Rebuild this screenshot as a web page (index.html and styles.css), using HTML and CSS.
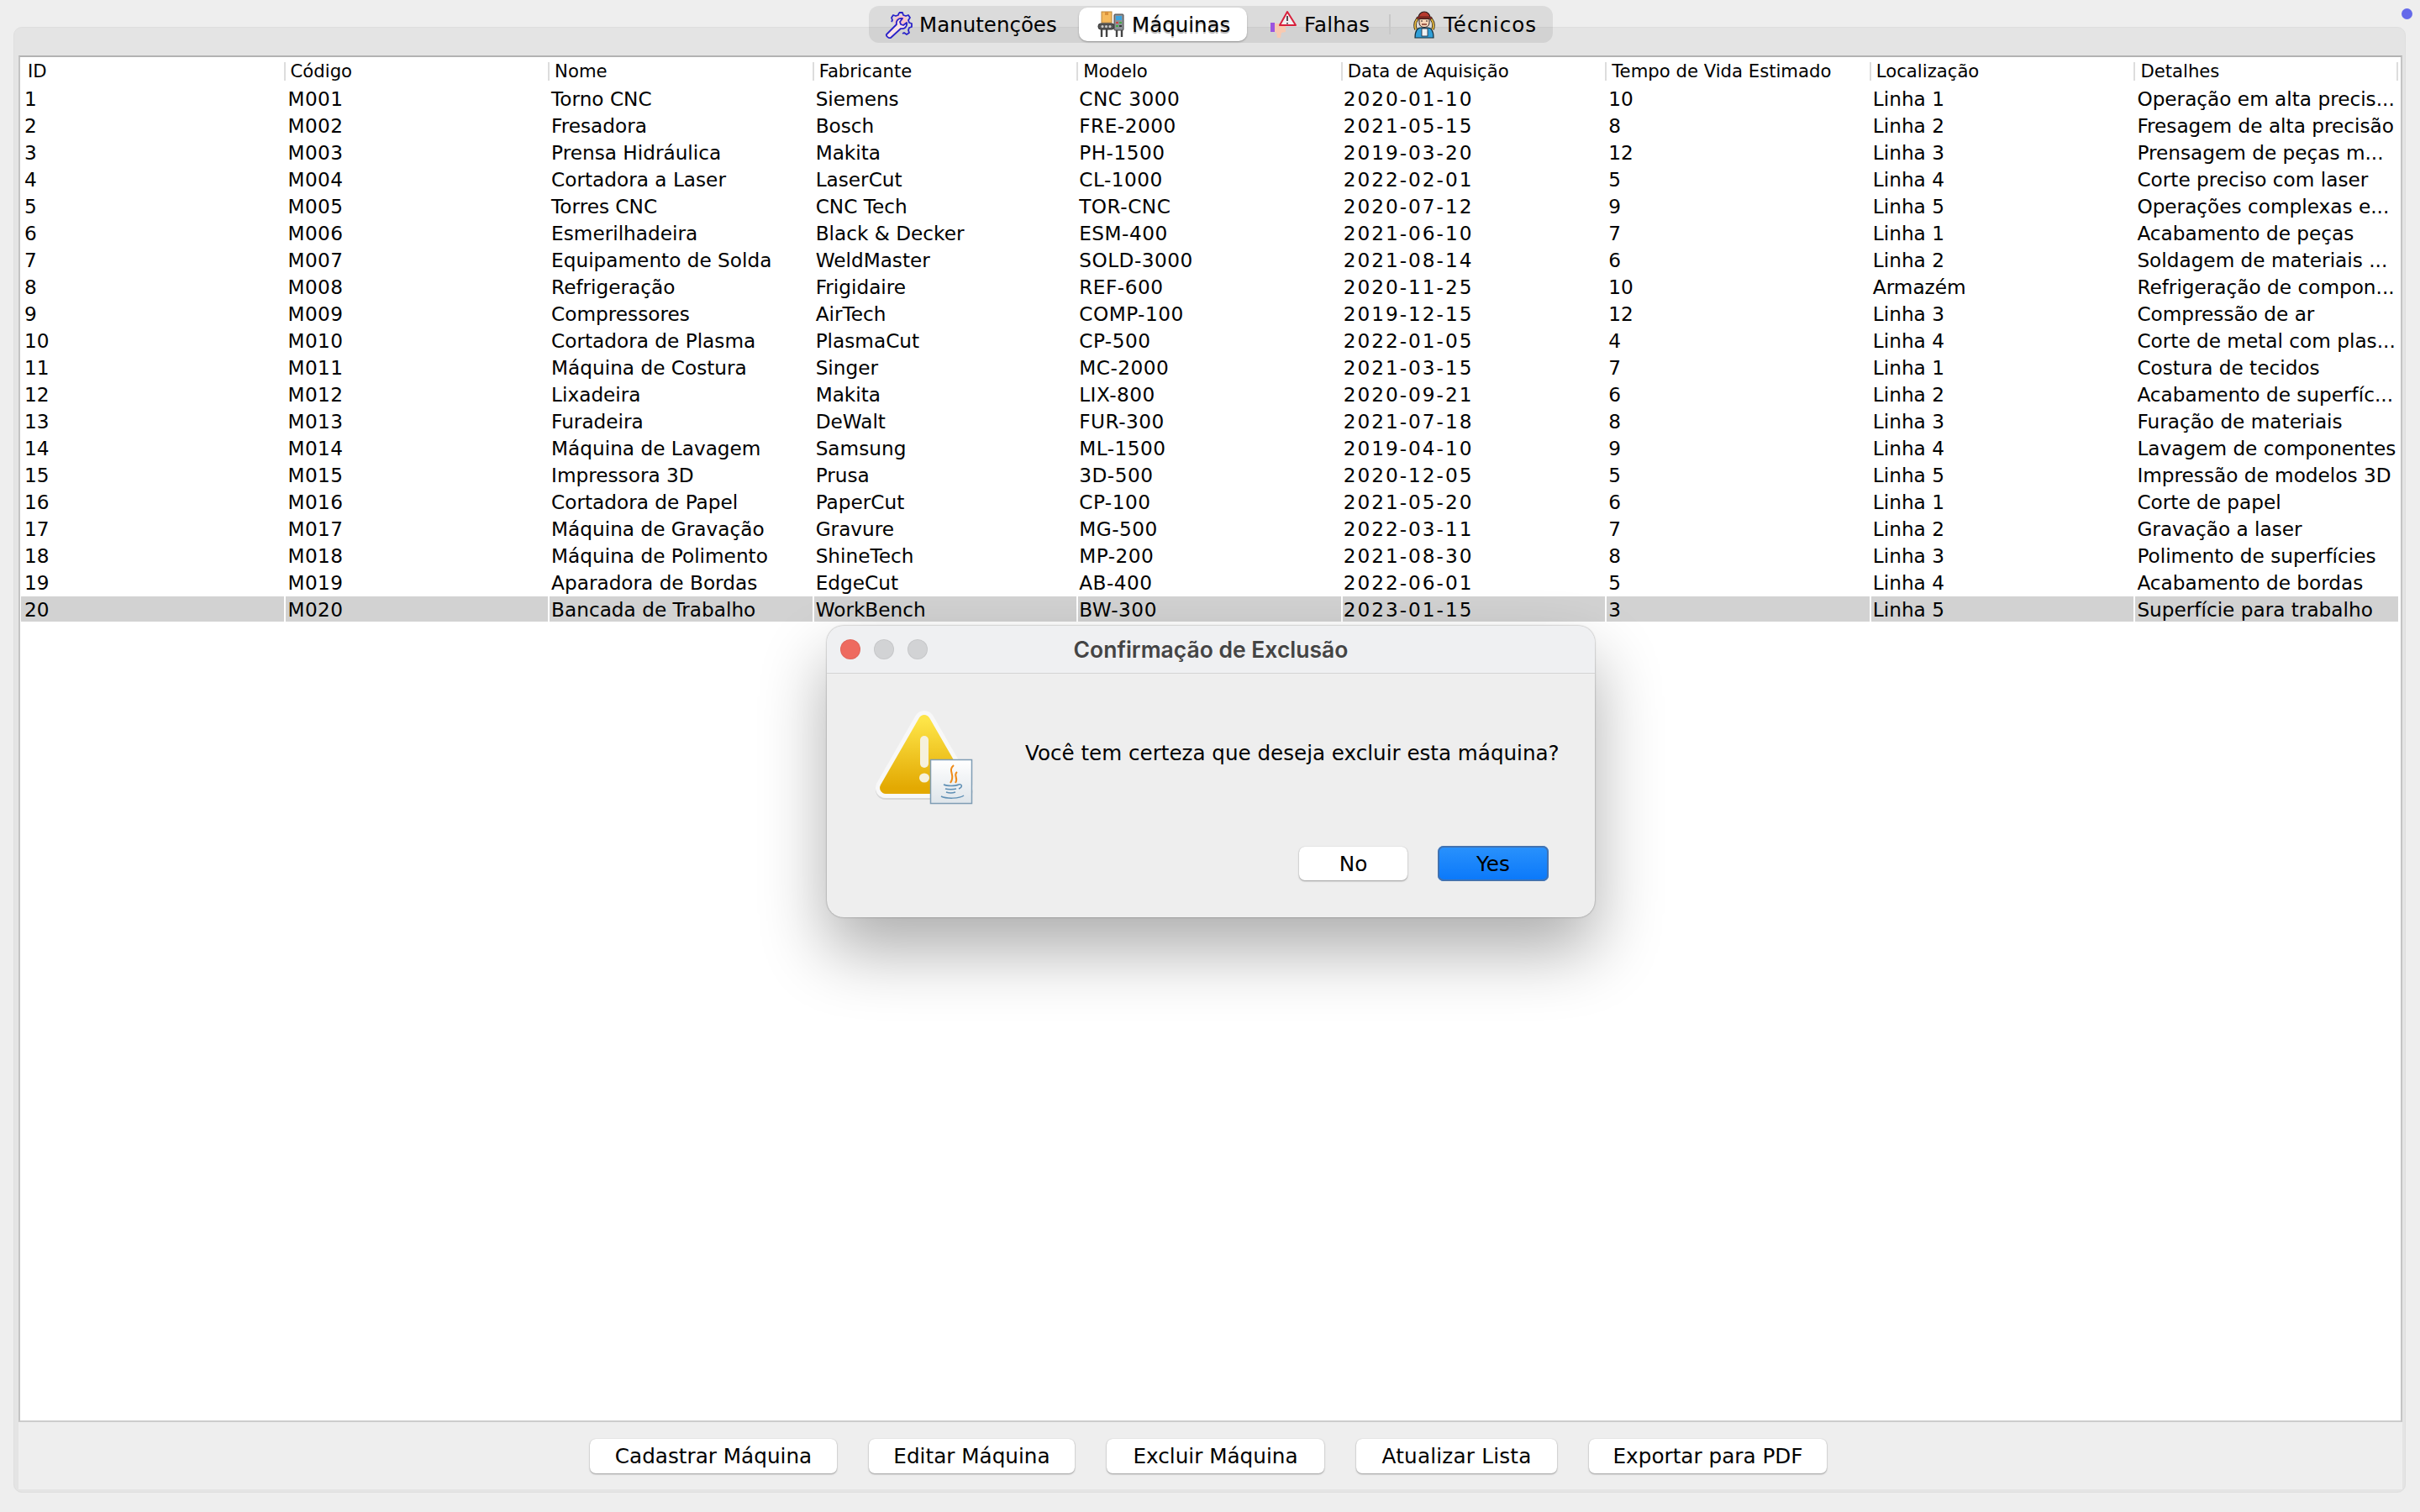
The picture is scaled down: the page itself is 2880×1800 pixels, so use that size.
FILE: index.html
```html
<!DOCTYPE html>
<html>
<head>
  <meta charset="UTF-8">
  <title>Máquinas</title>
  <link rel="stylesheet" href="styles.css">
</head>
<body>

<span class="status-dot"></span>

<nav class="tabs">
  <div class="tab tab-man">
    <svg class="icon" viewBox="0 0 33 33" width="33" height="33">
      <circle cx="19" cy="13" r="8" fill="#f9c4cc"/>
      <path d="M17 2l4 0 1 3 3 1 3-1 2 3-2 3 1 3 3 1 0 4-3 1-1 3 1 3-3 2-3-2-2 1" fill="none" stroke="#2a22c8" stroke-width="1.8" stroke-linejoin="round"/>
      <path d="M17 2l-1 3-3 1-3-1-2 3 1 3-1 2" fill="none" stroke="#2a22c8" stroke-width="1.8" stroke-linejoin="round"/>
      <path d="M2 28l12-12c-1-4 2-8 7-7l-3 4 1 3 3 1 4-3c1 5-3 8-7 7L7 32c-2 1-6-2-5-4z" fill="#fbe3e6" stroke="#2a22c8" stroke-width="1.8" stroke-linejoin="round"/>
    </svg>
    <span>Manutenções</span>
  </div>
  <div class="tab tab-maq active">
    <svg class="icon" viewBox="0 0 32 32" width="32" height="32">
      <rect x="5" y="1" width="12" height="13" fill="#f5b95c" stroke="#b9853a"/>
      <rect x="9" y="1" width="4" height="4" fill="#d9903a"/>
      <rect x="1" y="15" width="19" height="7" rx="3" fill="#555" stroke="#333"/>
      <circle cx="6" cy="18.5" r="1.5" fill="#ccc"/><circle cx="10.500" cy="18.500" r="1.500" fill="#ccc"/><circle cx="15" cy="18.500" r="1.500" fill="#ccc"/>
      <rect x="20" y="4" width="11" height="19" rx="1" fill="#8d9298" stroke="#444"/>
      <rect x="22" y="6" width="7" height="5" fill="#3ba4e0"/>
      <rect x="22" y="13" width="3" height="2" fill="#c44"/><rect x="26" y="13" width="3" height="2" fill="#4a4"/>
      <rect x="22" y="17" width="3" height="2" fill="#4a4"/><rect x="26" y="17" width="3" height="2" fill="#333"/>
      <path d="M5 22v9M11 22v9M23 23v8M29 23v8" stroke="#444" stroke-width="2.400"/>
    </svg>
    <span class="shadowed">Máquinas</span>
  </div>
  <div class="tab tab-fal">
    <svg class="icon" viewBox="0 0 31 32" width="31" height="32">
      <rect x="0" y="14" width="5" height="11" fill="#9b55e0"/>
      <path d="M5 15h10l3 2v8l-5 1-1 6h-4l-1-6-2-1z" fill="#f8c9b0"/>
      <path d="M20 1L30 17H11z" fill="#fff" fill-opacity=".6" stroke="#d8203c" stroke-width="2" stroke-linejoin="round"/>
      <path d="M20 6v6M20 14v1.500" stroke="#30202a" stroke-width="1.600"/>
    </svg>
    <span>Falhas</span>
  </div>
  <div class="tab tab-tec">
    <svg class="icon" viewBox="0 0 26 34" width="26" height="34">
      <path d="M5 10C2 14 1 18 3 23M21 10c3 4 4 8 2 13" fill="none" stroke="#3a3020" stroke-width="3.600"/>
      <path d="M5 10C2 14 1 18 3 23M21 10c3 4 4 8 2 13" fill="none" stroke="#e6b93f" stroke-width="1.800"/>
      <path d="M6 9a7 7 0 0 1 14 0z" fill="#b8392e" stroke="#2a1a1a" stroke-width="1.200"/>
      <rect x="4" y="8" width="18" height="2.500" rx="1" fill="#8e2a22" stroke="#2a1a1a" stroke-width=".6"/>
      <path d="M7 10.500h12v4c0 4-2.500 6-6 6s-6-2-6-6z" fill="#f6d5b8" stroke="#2a1a1a"/>
      <path d="M9 13h2M15 13h2" stroke="#2a1a1a" stroke-width="1.200"/>
      <path d="M10 17h6" stroke="#7a2a20" stroke-width="1.400"/>
      <path d="M2 33c0-8 3-12 7-12h8c4 0 7 4 7 12z" fill="#2f9fd8" stroke="#14303f" stroke-width="1.200"/>
      <rect x="10" y="22" width="7" height="9" fill="#eef2f4" stroke="#223" stroke-width=".8"/>
    </svg>
    <span>Técnicos</span>
  </div>
</nav>

<main class="panel">
  <div class="table-box">
    <table class="grid">
      <thead>
        <tr>
          <th><span class="head first">ID</span></th>
          <th><span class="head">Código</span></th>
          <th><span class="head">Nome</span></th>
          <th><span class="head">Fabricante</span></th>
          <th><span class="head">Modelo</span></th>
          <th><span class="head">Data de Aquisição</span></th>
          <th><span class="head">Tempo de Vida Estimado</span></th>
          <th><span class="head">Localização</span></th>
          <th><span class="head last">Detalhes</span></th>
        </tr>
      </thead>
      <tbody>
        <tr><td>1</td><td>M001</td><td>Torno CNC</td><td>Siemens</td><td>CNC 3000</td><td>2020-01-10</td><td>10</td><td>Linha 1</td><td>Operação em alta precis...</td></tr>
        <tr><td>2</td><td>M002</td><td>Fresadora</td><td>Bosch</td><td>FRE-2000</td><td>2021-05-15</td><td>8</td><td>Linha 2</td><td>Fresagem de alta precisão</td></tr>
        <tr><td>3</td><td>M003</td><td>Prensa Hidráulica</td><td>Makita</td><td>PH-1500</td><td>2019-03-20</td><td>12</td><td>Linha 3</td><td>Prensagem de peças m...</td></tr>
        <tr><td>4</td><td>M004</td><td>Cortadora a Laser</td><td>LaserCut</td><td>CL-1000</td><td>2022-02-01</td><td>5</td><td>Linha 4</td><td>Corte preciso com laser</td></tr>
        <tr><td>5</td><td>M005</td><td>Torres CNC</td><td>CNC Tech</td><td>TOR-CNC</td><td>2020-07-12</td><td>9</td><td>Linha 5</td><td>Operações complexas e...</td></tr>
        <tr><td>6</td><td>M006</td><td>Esmerilhadeira</td><td>Black &amp; Decker</td><td>ESM-400</td><td>2021-06-10</td><td>7</td><td>Linha 1</td><td>Acabamento de peças</td></tr>
        <tr><td>7</td><td>M007</td><td>Equipamento de Solda</td><td>WeldMaster</td><td>SOLD-3000</td><td>2021-08-14</td><td>6</td><td>Linha 2</td><td>Soldagem de materiais ...</td></tr>
        <tr><td>8</td><td>M008</td><td>Refrigeração</td><td>Frigidaire</td><td>REF-600</td><td>2020-11-25</td><td>10</td><td>Armazém</td><td>Refrigeração de compon...</td></tr>
        <tr><td>9</td><td>M009</td><td>Compressores</td><td>AirTech</td><td>COMP-100</td><td>2019-12-15</td><td>12</td><td>Linha 3</td><td>Compressão de ar</td></tr>
        <tr><td>10</td><td>M010</td><td>Cortadora de Plasma</td><td>PlasmaCut</td><td>CP-500</td><td>2022-01-05</td><td>4</td><td>Linha 4</td><td>Corte de metal com plas...</td></tr>
        <tr><td>11</td><td>M011</td><td>Máquina de Costura</td><td>Singer</td><td>MC-2000</td><td>2021-03-15</td><td>7</td><td>Linha 1</td><td>Costura de tecidos</td></tr>
        <tr><td>12</td><td>M012</td><td>Lixadeira</td><td>Makita</td><td>LIX-800</td><td>2020-09-21</td><td>6</td><td>Linha 2</td><td>Acabamento de superfíc...</td></tr>
        <tr><td>13</td><td>M013</td><td>Furadeira</td><td>DeWalt</td><td>FUR-300</td><td>2021-07-18</td><td>8</td><td>Linha 3</td><td>Furação de materiais</td></tr>
        <tr><td>14</td><td>M014</td><td>Máquina de Lavagem</td><td>Samsung</td><td>ML-1500</td><td>2019-04-10</td><td>9</td><td>Linha 4</td><td>Lavagem de componentes</td></tr>
        <tr><td>15</td><td>M015</td><td>Impressora 3D</td><td>Prusa</td><td>3D-500</td><td>2020-12-05</td><td>5</td><td>Linha 5</td><td>Impressão de modelos 3D</td></tr>
        <tr><td>16</td><td>M016</td><td>Cortadora de Papel</td><td>PaperCut</td><td>CP-100</td><td>2021-05-20</td><td>6</td><td>Linha 1</td><td>Corte de papel</td></tr>
        <tr><td>17</td><td>M017</td><td>Máquina de Gravação</td><td>Gravure</td><td>MG-500</td><td>2022-03-11</td><td>7</td><td>Linha 2</td><td>Gravação a laser</td></tr>
        <tr><td>18</td><td>M018</td><td>Máquina de Polimento</td><td>ShineTech</td><td>MP-200</td><td>2021-08-30</td><td>8</td><td>Linha 3</td><td>Polimento de superfícies</td></tr>
        <tr><td>19</td><td>M019</td><td>Aparadora de Bordas</td><td>EdgeCut</td><td>AB-400</td><td>2022-06-01</td><td>5</td><td>Linha 4</td><td>Acabamento de bordas</td></tr>
        <tr class="selected"><td>20</td><td>M020</td><td>Bancada de Trabalho</td><td>WorkBench</td><td>BW-300</td><td>2023-01-15</td><td>3</td><td>Linha 5</td><td>Superfície para trabalho</td></tr>
      </tbody>
    </table>
  </div>

  <footer class="actions">
    <button class="btn btn-cad">Cadastrar Máquina</button>
    <button class="btn btn-edi">Editar Máquina</button>
    <button class="btn btn-exc">Excluir Máquina</button>
    <button class="btn btn-atu">Atualizar Lista</button>
    <button class="btn btn-pdf">Exportar para PDF</button>
  </footer>
</main>

<section class="dialog">
  <header class="dialog-title">
    <span class="light red"></span>
    <span class="light"></span>
    <span class="light"></span>
    <h2>Confirmação de Exclusão</h2>
  </header>
  <div class="dialog-body">
    <svg class="warn" viewBox="0 0 116 115" width="116" height="115">
      <defs>
        <linearGradient id="warnFill" x1="0" y1="0" x2="0" y2="1">
          <stop offset="0" stop-color="#fde447"/>
          <stop offset="1" stop-color="#e3a902"/>
        </linearGradient>
        <linearGradient id="badgeFill" x1="0" y1="0" x2="0" y2="1">
          <stop offset="0" stop-color="#ffffff"/>
          <stop offset="1" stop-color="#dfe5ea"/>
        </linearGradient>
      </defs>
      <path d="M58 14L12 94h92z" fill="#bbb" stroke="#bbb" stroke-width="24" stroke-linejoin="round" transform="translate(0 2)" opacity=".45"/>
      <path d="M58 14L12 94h92z" fill="#f8f8f8" stroke="#f8f8f8" stroke-width="24" stroke-linejoin="round"/>
      <path d="M58 14L12 94h92z" fill="url(#warnFill)" stroke="url(#warnFill)" stroke-width="14" stroke-linejoin="round"/>
      <rect x="53" y="32" width="10" height="38" rx="5" fill="#f6f1dc"/>
      <ellipse cx="58" cy="82" rx="6" ry="5.500" fill="#f6f1dc"/>
      <rect x="65.500" y="60.500" width="49" height="52" fill="url(#badgeFill)" stroke="#7f9db4" stroke-width="1.500"/>
      <path d="M93 67c-8 7 3 11-4 21M97 75c-5 4 2 7-2 13" fill="none" stroke="#ef8a17" stroke-width="2"/>
      <path d="M81 90c4 2 14 2 18 0M83 95c3 1 10 1 13 0M84 99c3 1 8 1 11 0M78 104c6 3 22 3 27-1M99 90c4-1 5 3 0 5" fill="none" stroke="#5f8fb4" stroke-width="1.500"/>
    </svg>
    <p class="dialog-msg">Você tem certeza que deseja excluir esta máquina?</p>
  </div>
  <div class="dialog-actions">
    <button class="btn dlg-no">No</button>
    <button class="btn dlg-yes">Yes</button>
  </div>
</section>

</body>
</html>
```

FILE: styles.css
```css
html, body {
  margin: 0;
  height: 1800px;
  overflow: hidden;
}
body {
  position: relative;
  display: flex;
  flex-direction: column;
  background-color: #eeeeee;
  color: #000;
  font-family: "DejaVu Sans", sans-serif;
}

.status-dot {
  position: absolute;
  top: 10px;
  left: 2858px;
  width: 13px;
  height: 13px;
  border-radius: 50%;
  background: #6469ea;
}

/* segmented tabs, they sit over the panel's top edge */
.tabs {
  position: relative;
  z-index: 1;
  align-self: flex-start;
  display: flex;
  align-items: center;
  margin: 7px 0 -19px 1034px;
  height: 44px;
  width: 814px;
  border-radius: 12px;
  background: rgba(0, 0, 0, 0.08);
  font-size: 24.5px;
}
.tab {
  display: flex;
  align-items: center;
  gap: 9px;
  height: 40px;
  box-sizing: border-box;
}
.tab-man { width: 250px; padding-left: 19px; gap: 8px; }
.tab-maq { width: 200px; padding-left: 22px; }
.tab-fal { width: 169px; padding-left: 28px; letter-spacing: 0.2px; }
.tab-tec {
  width: 195px;
  padding-left: 27px;
  gap: 10px;
  border-left: 2px solid #c8c8c8;
  height: 24px;
  letter-spacing: 1px;
}
.tab.active {
  background: #fff;
  border-radius: 10px;
  box-shadow: 0 1px 2px rgba(0, 0, 0, 0.3);
}
.shadowed {
  text-shadow: 0 2px 1px rgba(0, 0, 0, 0.3);
}
.icon {
  flex: none;
}

.panel {
  flex: none;
  display: flex;
  flex-direction: column;
  box-sizing: border-box;
  margin: 0 17px 0 16px;
  height: 1745px;
  padding: 33px 3px 3px 5px;
  background: #e4e4e4;
  border: 1px solid #dedede;
  border-radius: 10px;
}
.table-box {
  flex: 1;
  background: #fff;
  border-top: 2px solid #b2b2b2;
  border-left: 2px solid #c4c4c4;
  border-right: 2px solid #c4c4c4;
  border-bottom: 2px solid #cccccc;
}
.grid {
  table-layout: fixed;
  width: 2833px;
  border-collapse: separate;
  border-spacing: 2px;
  margin: -2px 0 0 -1px;
  font-size: 23.2px;
}
.grid th {
  height: 30px;
  padding: 2px 0 0;
  font-weight: normal;
  font-size: 21.2px;
  text-align: left;
}
.head {
  display: block;
  height: 22px;
  line-height: 22px;
  padding-left: 6px;
  margin-left: -2px;
  border-left: 2px solid #dddddd;
  white-space: nowrap;
}
.head.first {
  padding-left: 8px;
  border-left-color: transparent;
}
.head.last {
  border-right: 2px solid #dddddd;
}
.grid td {
  height: 29px;
  padding: 1px 0 0 2px;
  line-height: 29px;
  white-space: nowrap;
  overflow: hidden;
}
.grid td:first-child {
  padding-left: 4px;
}
.grid td:nth-child(2) {
  padding-left: 3px;
  letter-spacing: 0.4px;
}
.grid td:nth-child(5) {
  padding-left: 1px;
  letter-spacing: 0.5px;
}
.grid td:nth-child(6) {
  padding-left: 1px;
  letter-spacing: 2px;
}
.selected td {
  background: #d2d2d2;
}

.actions {
  flex: none;
  display: flex;
  justify-content: center;
  align-items: center;
  gap: 38px;
  height: 80px;
  padding-right: 5px;
  background: #eeeeee;
}
.btn {
  height: 41px;
  padding: 0;
  border: none;
  border-radius: 7px;
  background: #fff;
  color: #000;
  font-family: "DejaVu Sans", sans-serif;
  font-size: 24.7px;
  box-shadow: 0 1px 2px rgba(0, 0, 0, 0.35), 0 0 1px rgba(0, 0, 0, 0.2);
}
.btn-cad { width: 294px; }
.btn-edi { width: 245px; }
.btn-exc { width: 259px; }
.btn-atu { width: 239px; letter-spacing: 0.2px; }
.btn-pdf { width: 283px; }

/* modal confirm, floats over the table */
.dialog {
  position: absolute;
  z-index: 2;
  left: 984px;
  top: 745px;
  width: 914px;
  height: 347px;
  display: flex;
  flex-direction: column;
  box-sizing: border-box;
  background: #eeeeee;
  border-radius: 20px;
  box-shadow: 0 40px 80px rgba(0, 0, 0, 0.32), 0 0 2px rgba(0, 0, 0, 0.45);
  overflow: hidden;
}
.dialog-title {
  position: relative;
  flex: none;
  display: flex;
  align-items: center;
  gap: 16px;
  height: 57px;
  padding-left: 16px;
  box-sizing: border-box;
  background: #eff0f2;
  border-bottom: 1px solid #d4d4d4;
}
.dialog-title h2 {
  position: absolute;
  left: 0;
  right: 0;
  margin: 0;
  text-align: center;
  font-family: Inter, sans-serif;
  font-size: 26.5px;
  font-weight: 600;
  color: #444444;
}
.light {
  width: 24px;
  height: 24px;
  border-radius: 50%;
  background: #d2d3d5;
  box-shadow: inset 0 0 0 1px rgba(0, 0, 0, 0.06);
}
.light.red {
  background: #ee6a5f;
}
.dialog-body {
  display: flex;
  align-items: flex-start;
  gap: 62px;
  padding: 42px 0 0 58px;
}
.warn {
  flex: none;
}
.dialog-msg {
  margin: 37px 0 0;
  font-size: 24.6px;
  line-height: 32px;
  white-space: nowrap;
}
.dialog-actions {
  display: flex;
  justify-content: flex-end;
  align-items: center;
  gap: 36px;
  margin-top: auto;
  padding: 0 55px 43px 0;
}
.dlg-no {
  width: 129px;
  height: 40px;
}
.dlg-yes {
  width: 132px;
  height: 42px;
  background: linear-gradient(#2a92fc, #0a78fa);
  box-shadow: inset 0 0 0 2px #4272b0;
}
```
